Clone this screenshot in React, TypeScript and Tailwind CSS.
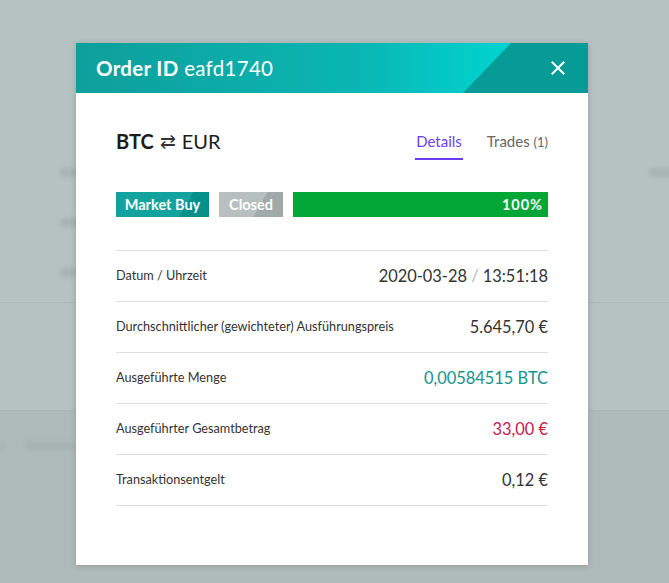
import React from "react";

const rows: { label: string; value: React.ReactNode }[] = [
  {
    label: "Datum / Uhrzeit",
    value: (
      <span className="text-[#333]">
        2020-03-28 <span className="text-[#b8b8b8]">/</span> 13:51:18
      </span>
    ),
  },
  {
    label: "Durchschnittlicher (gewichteter) Ausführungspreis",
    value: <span className="text-[#333]">5.645,70 €</span>,
  },
  {
    label: "Ausgeführte Menge",
    value: <span className="text-[#14938e]">0,00584515 BTC</span>,
  },
  {
    label: "Ausgeführter Gesamtbetrag",
    value: <span className="text-[#c8174d]">33,00 €</span>,
  },
  {
    label: "Transaktionsentgelt",
    value: <span className="text-[#333]">0,12 €</span>,
  },
];

function Blob({ w, className = "" }: { w: string; className?: string }) {
  return <div className={`h-[9px] rounded-full bg-[#a7b3b2] blur-[2px] ${w} ${className}`} />;
}

export default function App() {
  return (
    <div
      className="relative w-[669px] h-[583px] overflow-hidden bg-[#b6c2c1]"
      style={{ fontFamily: "Lato, 'Noto Sans', sans-serif" }}
    >
      {/* blurred background page */}
      <div className="flex flex-col h-full">
        <div className="h-[302px] flex justify-between pl-[60px] pt-[168px]">
          <div className="flex flex-col gap-[41px]">
            <Blob w="w-[20px]" />
            <Blob w="w-[20px]" />
            <Blob w="w-[20px]" />
          </div>
          <div className="flex flex-col mr-[-10px]">
            <Blob w="w-[30px]" />
          </div>
        </div>
        <div className="h-[108px] border-t border-[#adb9b8]" />
        <div className="flex-1 bg-[#afbbba] border-t border-[#a9b5b4] pt-[30px] flex gap-[20px] pl-0">
          <Blob w="w-[4px]" />
          <Blob w="w-[50px]" />
        </div>
      </div>

      {/* modal */}
      <div className="absolute left-[76px] top-[43px] w-[512px] h-[522px] bg-white shadow-[0_1px_6px_rgba(0,0,0,0.18)] flex flex-col">
        <div className="relative h-[50px] flex items-center justify-between pl-[20px] pr-[23px] bg-[linear-gradient(to_right,#0e9f9b,#0ab6b3_55%,#00d4d1_85%)]">
          <div className="absolute inset-0 bg-[#069b96] [clip-path:polygon(435px_0,100%_0,100%_100%,387px_100%)]" />
          <div className="relative text-white text-[20.5px] leading-none tracking-[0.3px]">
            <span className="font-bold">Order ID</span> eafd1740
          </div>
          <svg className="relative" width="14" height="14" viewBox="0 0 14 14">
            <path d="M1.5 1.5 L12.5 12.5 M12.5 1.5 L1.5 12.5" stroke="white" strokeWidth="2" strokeLinecap="square" />
          </svg>
        </div>

        <div className="px-[40px] pt-[38px] flex flex-col">
          <div className="flex justify-between items-start">
            <div className="text-[20px] leading-[22px] text-[#1c1c1c] flex items-center mt-[-1px]">
              <span className="font-bold">BTC</span>
              <span className="mx-[6px] text-[#333] text-[19px]">⇄</span>
              <span>EUR</span>
            </div>
            <div className="flex gap-[24px] text-[15px] leading-[20px]">
              <div className="text-[#6c3df0] border-b-2 border-[#6c3df0] pb-[7px] px-[1px]">Details</div>
              <div className="text-[#666]">
                Trades <span className="text-[13px]">(1)</span>
              </div>
            </div>
          </div>

          <div className="mt-[32px] flex gap-[10px] h-[25px] text-[14.5px] font-bold text-white">
            <div className="w-[93px] flex items-center justify-center bg-[linear-gradient(120deg,#12a39f_72%,#06908c_72%)]">
              Market Buy
            </div>
            <div className="w-[64px] flex items-center justify-center bg-[linear-gradient(120deg,#b7c0bf_62%,#a1aaa9_62%)]">
              Closed
            </div>
            <div className="flex-1 flex items-center justify-end pr-[5px] bg-[#00a737] tracking-[1px]">100%</div>
          </div>

          <div className="mt-[33px] flex flex-col border-b border-[#dedede]">
            {rows.map((r) => (
              <div key={r.label} className="h-[51px] flex items-center justify-between border-t border-[#dedede]">
                <span className="text-[12.7px] text-[#333]">{r.label}</span>
                <span className="text-[16.4px]">{r.value}</span>
              </div>
            ))}
          </div>
        </div>
      </div>
    </div>
  );
}
